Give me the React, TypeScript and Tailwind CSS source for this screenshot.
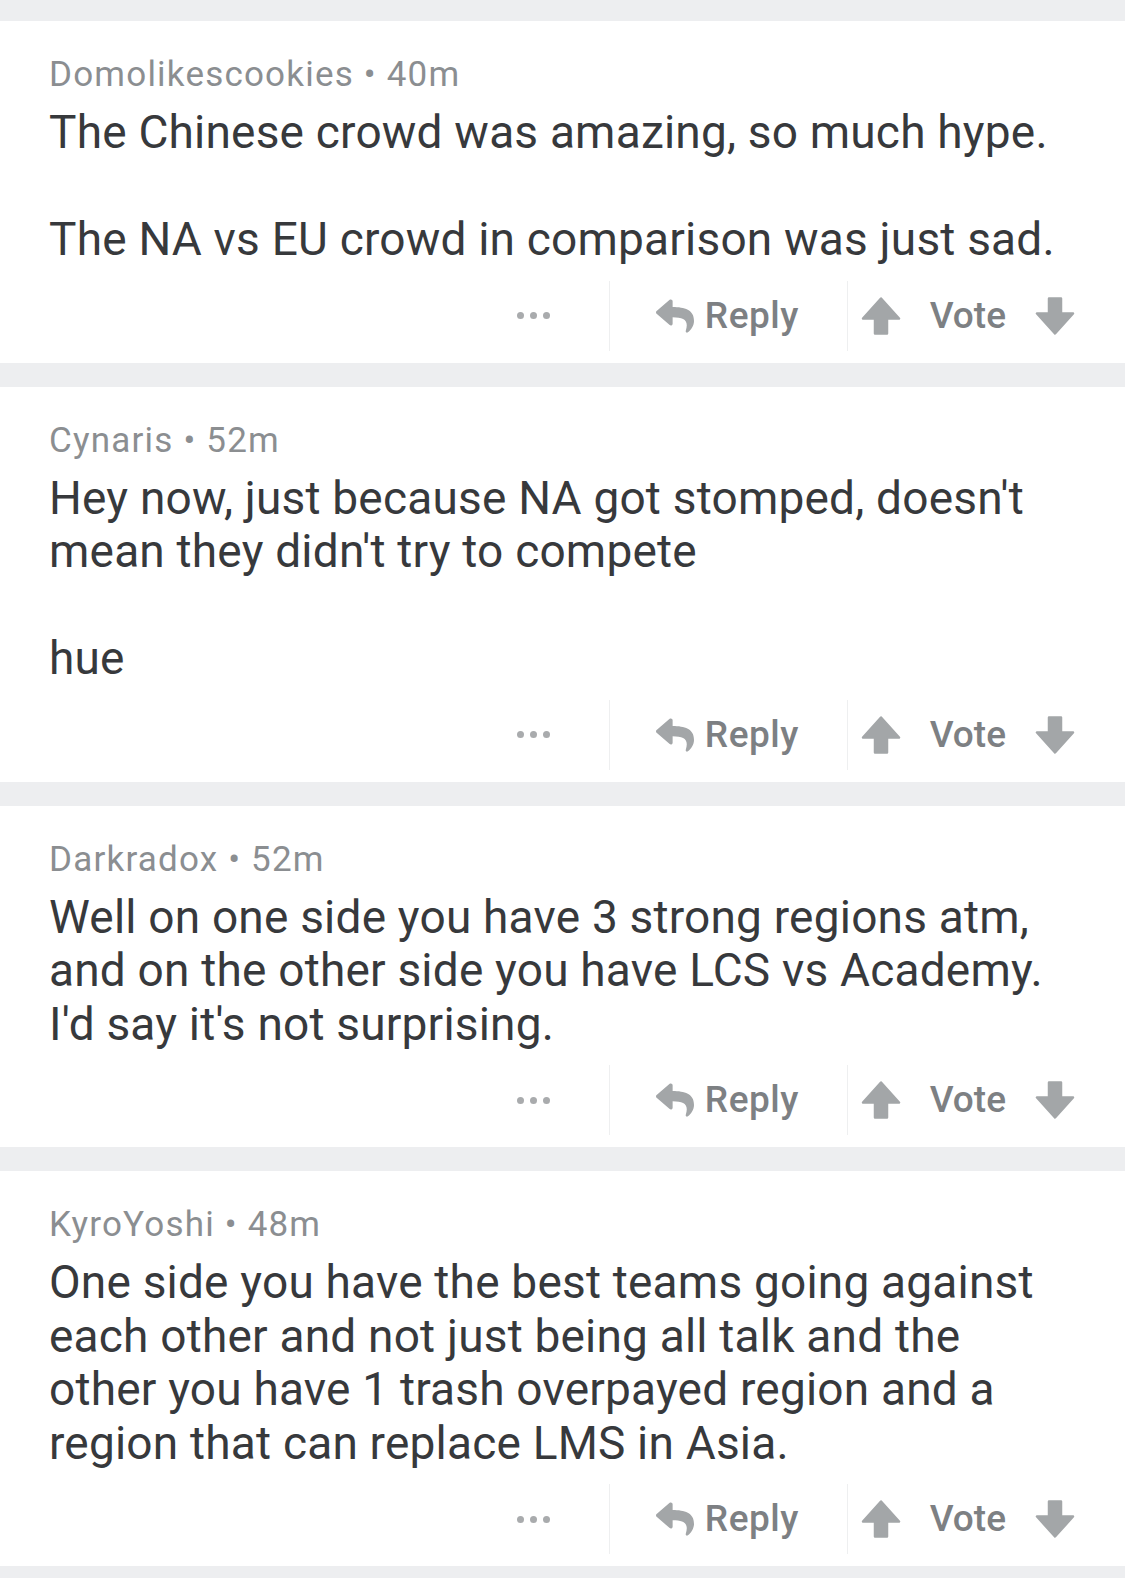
import { FaReply } from "react-icons/fa";

interface Comment {
  id: number;
  author: string;
  age: string;
  body: string;
}

const comments: Comment[] = [
  {
    id: 1,
    author: "Domolikescookies",
    age: "40m",
    body: "The Chinese crowd was amazing, so much hype.\n\nThe NA vs EU crowd in comparison was just sad.",
  },
  {
    id: 2,
    author: "Cynaris",
    age: "52m",
    body: "Hey now, just because NA got stomped, doesn't mean they didn't try to compete\n\nhue",
  },
  {
    id: 3,
    author: "Darkradox",
    age: "52m",
    body: "Well on one side you have 3 strong regions atm, and on the other side you have LCS vs Academy. I'd say it's not surprising.",
  },
  {
    id: 4,
    author: "KyroYoshi",
    age: "48m",
    body: "One side you have the best teams going against each other and not just being all talk and the other you have 1 trash overpayed region and a region that can replace LMS in Asia.",
  },
];

const ArrowUp = ({ down = false }: { down?: boolean }) => (
  <svg
    width="40"
    height="38"
    viewBox="0 0 40 38"
    className={down ? "rotate-180" : ""}
  >
    <path
      d="M20 1.5 L38 21.5 H26 V36.5 H14 V21.5 H2 Z"
      fill="#a3a6a8"
      stroke="#a3a6a8"
      strokeWidth="2.5"
      strokeLinejoin="round"
    />
  </svg>
);

const CommentCard = ({ comment }: { comment: Comment }) => {
  return (
    <div className="bg-white pt-[34px] pb-[12px]">
      <div className="px-[49px] text-[35px] leading-[40px] tracking-[1.2px] text-[#8b8e91]">
        {comment.author} • {comment.age}
      </div>
      <div className="mt-[11px] pl-[49px] pr-[49px] text-[46px] leading-[53.5px] tracking-[0.2px] text-[#37393c] whitespace-pre-line">
        {comment.body}
      </div>
      {/* 액션 바 */}
      <div className="mt-[14px] flex h-[70px] items-stretch justify-end pr-[50px]">
        <div className="flex items-center gap-[6px] pr-[59px]">
          <span className="h-[7px] w-[7px] rounded-full bg-[#a9abad]" />
          <span className="h-[7px] w-[7px] rounded-full bg-[#a9abad]" />
          <span className="h-[7px] w-[7px] rounded-full bg-[#a9abad]" />
        </div>
        <div className="w-px bg-[#eeeff0]" />
        <button className="flex items-center pl-[46px] pr-[48px]">
          <FaReply className="h-[38px] w-[38px] text-[#a3a6a8]" />
          <span className="ml-[11px] text-[37px] font-medium tracking-[0.5px] text-[#7d8083]">
            Reply
          </span>
        </button>
        <div className="w-px bg-[#eeeff0]" />
        <div className="flex items-center pl-[13px]">
          <ArrowUp />
          <span className="ml-[29px] mr-[29px] text-[37px] font-medium text-[#7d8083]">
            Vote
          </span>
          <ArrowUp down />
        </div>
      </div>
    </div>
  );
};

const App = () => {
  return (
    <div
      className="min-h-screen bg-[#edeef0] pt-[21px]"
      style={{ fontFamily: "Roboto, sans-serif" }}
    >
      <div className="flex flex-col gap-[24px]">
        {comments.map((c) => (
          <CommentCard key={c.id} comment={c} />
        ))}
      </div>
    </div>
  );
};

export default App;
